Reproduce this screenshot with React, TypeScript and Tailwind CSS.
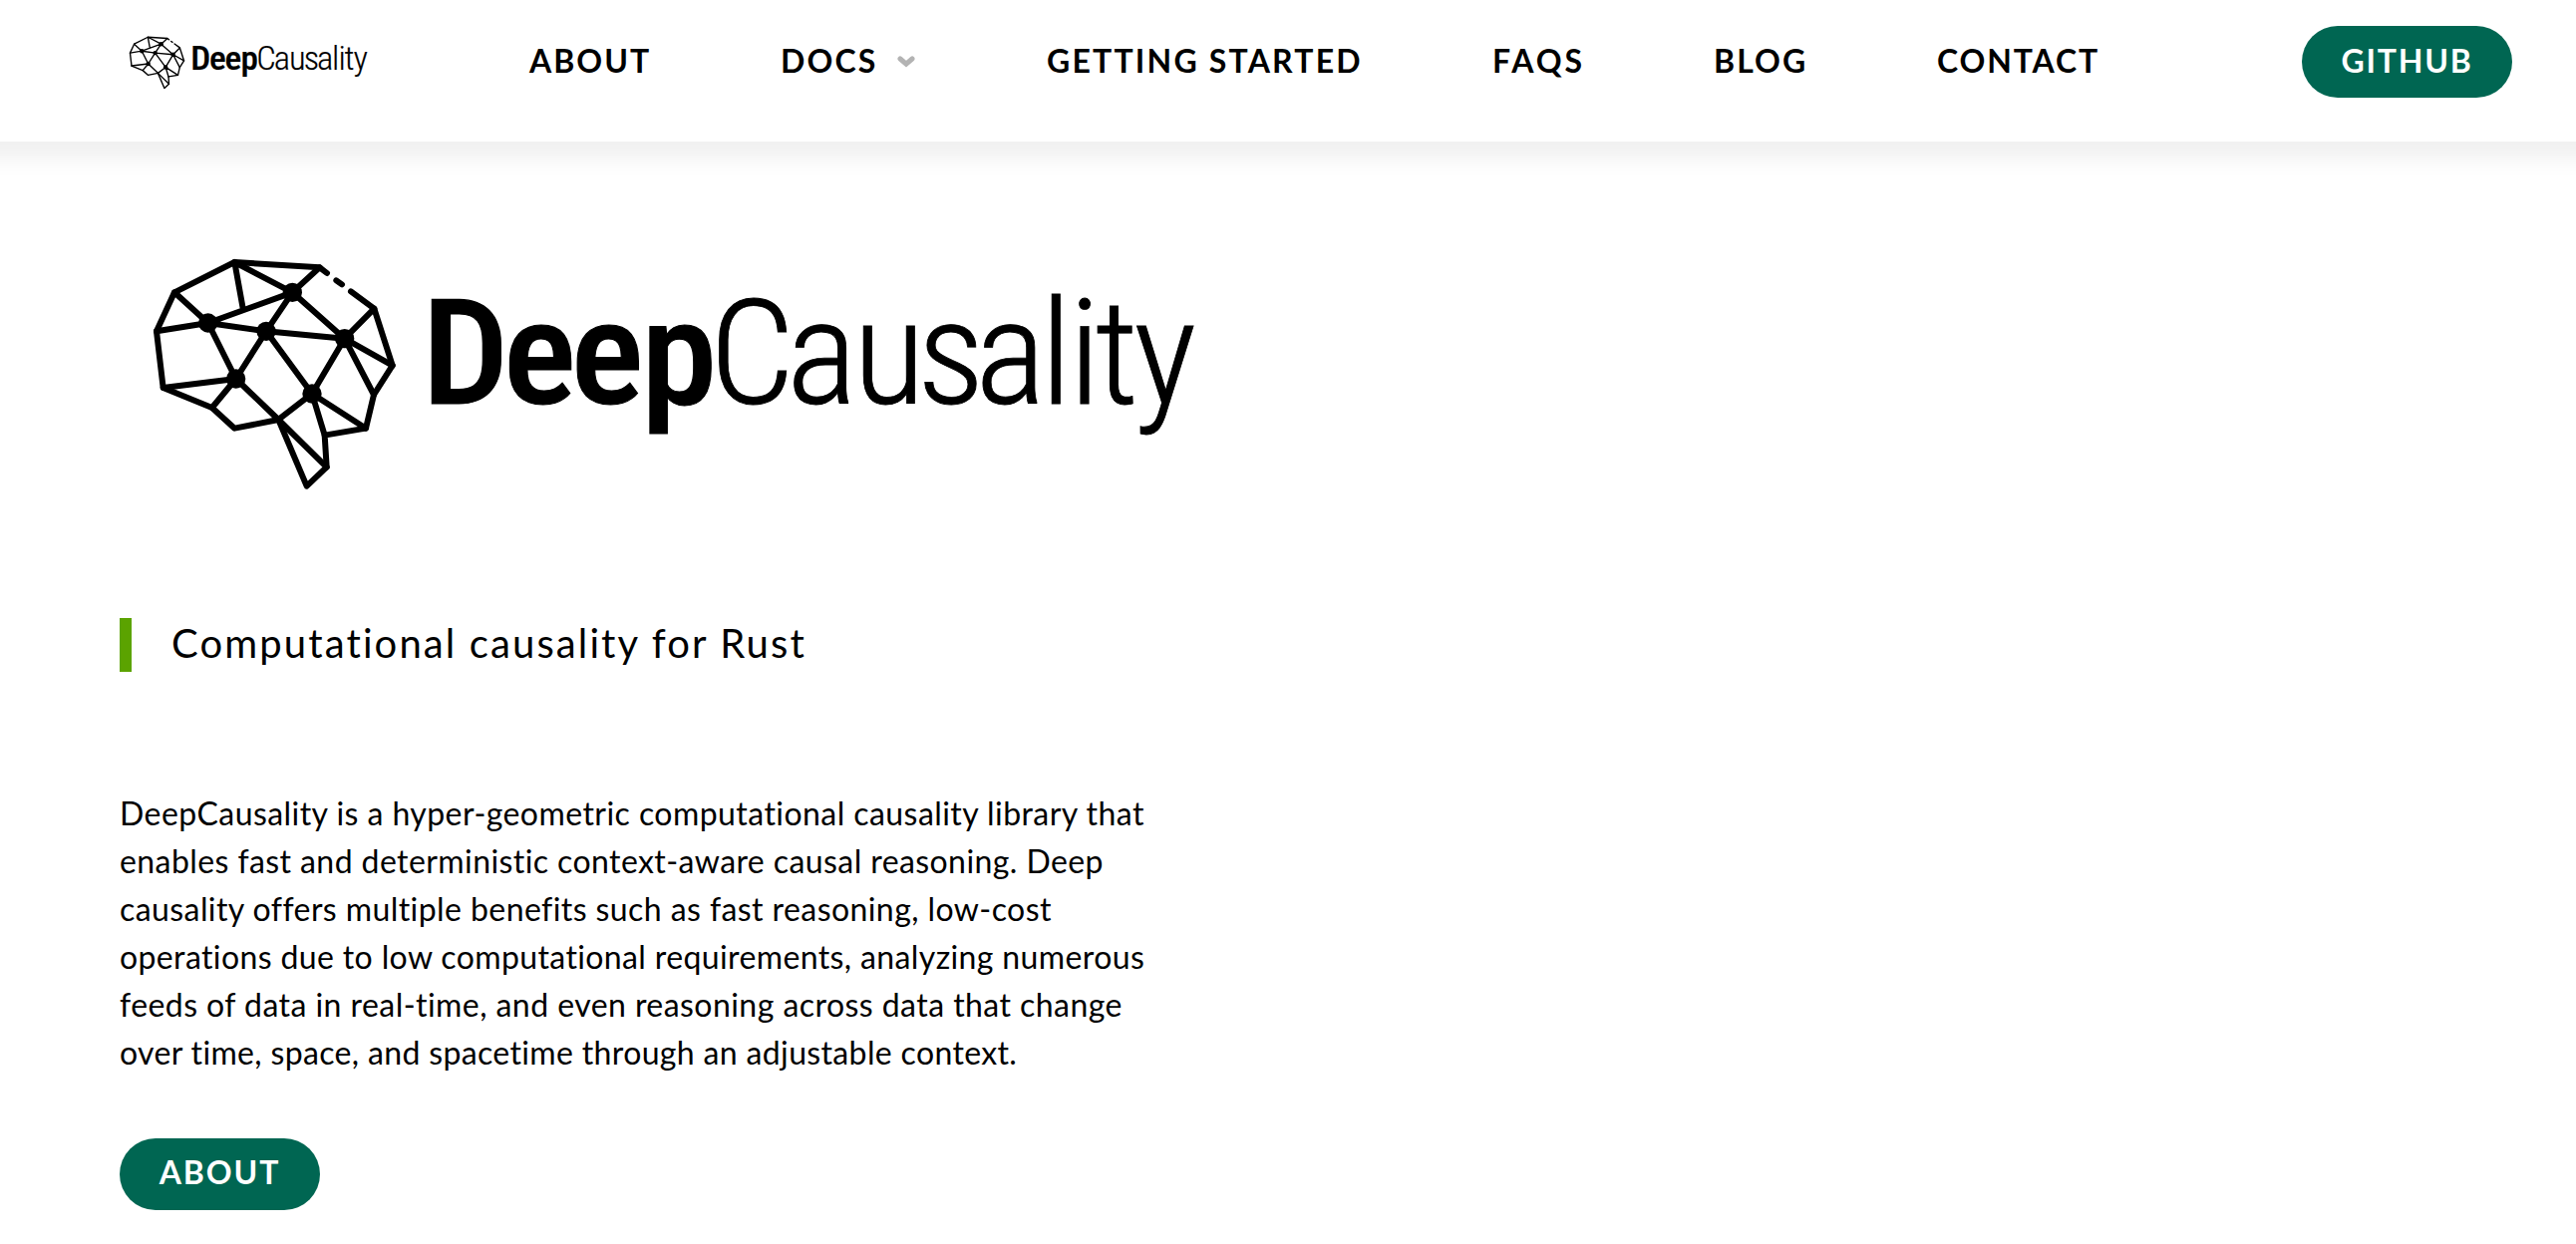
function Logo({ className, title }: { className: string; title: string }) {
  return (
    <svg viewBox="0 0 1120 270" className={className} role="img" aria-label={title}>
      <g transform="translate(20 0) scale(0.33333)" fill="none" stroke="#000" strokeWidth="18" strokeLinecap="round" strokeLinejoin="round">
        <path d="M564 102L542 85L286 69L105 160L51 277L71 447L218 507L286 569L418 543L503 743L563 686L557 590L681 569L705 468L761 380L706 209L636 157" />
        <path d="M592 124L609 136" />
        <path d="M286 69L460 160L542 85M286 69L311 208M105 160L206 252L51 277M206 252L460 160L617 299L706 209M460 160L381 277L206 252L290 420L381 277L617 299L761 380M617 299L705 468M617 299L519 465L381 277M71 447L290 420L218 507M290 420L418 543L519 465L557 590M519 465L681 569M418 543L563 686" />
        <g fill="#000" stroke="none">
          <circle cx="460" cy="160" r="29" />
          <circle cx="206" cy="252" r="29" />
          <circle cx="381" cy="277" r="29" />
          <circle cx="617" cy="299" r="29" />
          <circle cx="290" cy="420" r="29" />
          <circle cx="519" cy="465" r="29" />
        </g>
      </g>
      <g className="font-['Roboto'] text-[147px] [font-stretch:75%]" stroke="#000">
        <text y="165" x="288.5 366.4 431 498" transform="scale(1.05 1)" className="font-medium" strokeWidth="1">Deep</text>
        <text y="165" x="574.3 649.4 714.1 776.6 832.9 896.3 924.4 949.8 987.5" transform="scale(1.03 1)" className="font-light" strokeWidth="0.8">Causality</text>
      </g>
    </svg>
  );
}

const links = [
  { label: "ABOUT", box: "w-[252px]", track: "tracking-[2px]" },
  { label: "DOCS", box: "w-[267px]", track: "tracking-[2.1px]", menu: true },
  { label: "GETTING STARTED", box: "w-[447px]", track: "tracking-[2.2px]" },
  { label: "FAQS", box: "w-[222px]", track: "tracking-[3px]" },
  { label: "BLOG", box: "w-[224px]", track: "tracking-[2.1px]" },
  { label: "CONTACT", box: "w-[366px]", track: "tracking-[1.85px]" },
];

const lines = [
  ["DeepCausality is a hyper-geometric computational causality library that", "tracking-[0.44px]"],
  ["enables fast and deterministic context-aware causal reasoning. Deep", "tracking-[0.417px]"],
  ["causality offers multiple benefits such as fast reasoning, low-cost", "tracking-[0.421px]"],
  ["operations due to low computational requirements, analyzing numerous", "tracking-[0.38px]"],
  ["feeds of data in real-time, and even reasoning across data that change", "tracking-[0.445px]"],
  ["over time, space, and spacetime through an adjustable context.", "tracking-[0.35px]"],
];

export default function App() {
  return (
    <div className="min-h-[1248px] overflow-x-hidden bg-white font-['Lato',sans-serif] text-black">
      <header className="flex h-[142px] items-start bg-white pl-[122px] shadow-[0_-12px_20px_30px_rgba(0,0,0,0.06)]">
        <Logo className="mt-[32px] w-[256px]" title="DeepCausality" />
        <nav className="ml-[153px] flex h-[124px] items-center">
          <ul className="flex pb-[2px] text-[32px]/[48px] font-bold">
            {links.map((l) => (
              <li key={l.label} className={`${l.box} ${l.track} flex items-center whitespace-nowrap`}>
                {l.label}
                {l.menu && (
                  <svg viewBox="0 0 18 12" className="mt-px ml-[20px] w-[18px]" fill="none" stroke="#b3b3b3" strokeWidth="5" strokeLinecap="round">
                    <path d="M3 3L9 8.2L15 3" />
                  </svg>
                )}
              </li>
            ))}
          </ul>
          <a className="flex h-[72px] w-[211px] items-center justify-center rounded-full bg-[#006652] pb-[2px] text-[32px] font-bold tracking-[1.8px] text-white">GITHUB</a>
        </nav>
      </header>
      <main className="flex flex-col items-start px-[120px] pt-[98px]">
        <Logo className="w-[1120px]" title="DeepCausality" />
        <blockquote className="mt-[110px] border-l-[12px] border-[#5ba300] pb-[3px] pl-[40px] text-[40px]/[51px] tracking-[2.12px]">
          Computational causality for Rust
        </blockquote>
        <p className="mt-[118px] text-[32px]/[48px]">
          {lines.map(([text, track]) => (
            <span key={text} className={`${track} block whitespace-nowrap`}>{text}</span>
          ))}
        </p>
        <a className="mt-[62px] flex h-[72px] w-[201px] items-center justify-center rounded-full bg-[#006652] pb-[4px] text-[32px] font-bold tracking-[1.9px] text-white">ABOUT</a>
      </main>
    </div>
  );
}
